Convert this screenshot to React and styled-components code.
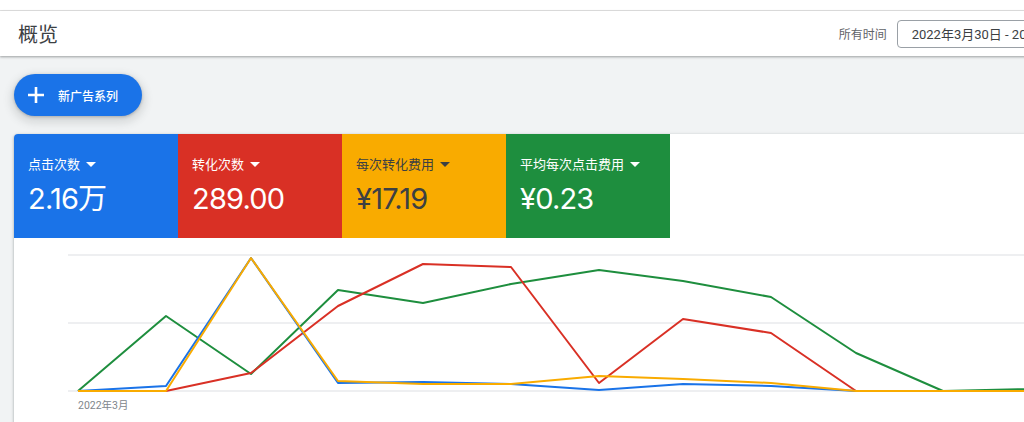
import styled, { createGlobalStyle } from "styled-components";

const GlobalStyle = createGlobalStyle`
  body {
    margin: 0;
    overflow: hidden;
    background: #f1f3f4;
    font-family: Roboto, "Noto Sans CJK SC", sans-serif;
  }
`;

const Page = styled.div`
  width: 1133px;
  min-height: 422px;
  background: #f1f3f4;
`;

const TopStrip = styled.div`
  height: 10px;
  background: #fff;
  border-bottom: 1px solid #e3e3e3;
`;

const Header = styled.header`
  height: 45px;
  display: flex;
  align-items: center;
  padding: 0 16px 0 18px;
  background: #fff;
  box-shadow: 0 1px 2px rgba(60, 64, 67, 0.35), 0 1px 3px rgba(60, 64, 67, 0.15);
  position: relative;
  z-index: 1;
`;

const Title = styled.h1`
  margin: 0;
  font-size: 20px;
  font-weight: 400;
  color: #3c4043;
  font-family: "Noto Sans CJK SC", sans-serif;
`;

const Range = styled.div`
  margin-left: auto;
  display: flex;
  align-items: center;
  gap: 10px;
`;

const RangeLabel = styled.span`
  font-size: 12px;
  color: #5f6368;
  font-family: "Noto Sans CJK SC", sans-serif;
`;

const DateBox = styled.div`
  height: 26px;
  display: flex;
  align-items: center;
  padding: 0 14px;
  border: 1px solid #9aa0a6;
  border-radius: 4px;
  font-size: 13px;
  color: #3c4043;
  white-space: nowrap;
  font-family: Roboto, "Noto Sans CJK SC", sans-serif;
`;

const Main = styled.main`
  padding: 18px 0 0 14px;
`;

const NewButton = styled.button`
  height: 42px;
  padding: 0 24px 0 13px;
  display: flex;
  align-items: center;
  gap: 13px;
  border: none;
  border-radius: 21px;
  background: #1a73e8;
  color: #fff;
  font-size: 12px;
  font-weight: 500;
  font-family: "Noto Sans CJK SC", sans-serif;
  box-shadow: 0 1px 3px rgba(60, 64, 67, 0.3), 0 4px 8px 3px rgba(60, 64, 67, 0.15);
`;

const Card = styled.section`
  margin-top: 18px;
  background: #fff;
  border-radius: 4px 0 0 0;
  box-shadow: 0 1px 2px rgba(60, 64, 67, 0.3), 0 1px 3px 1px rgba(60, 64, 67, 0.15);
  overflow: hidden;
`;

const Tiles = styled.div`
  display: flex;
`;

const Tile = styled.div`
  width: 164px;
  height: 104px;
  box-sizing: border-box;
  padding: 22px 14px 0;
  background: ${(p) => p.$bg};
  color: ${(p) => p.$fg};
`;

const Label = styled.div`
  display: flex;
  align-items: center;
  gap: 6px;
  font-size: 13px;
  line-height: 16px;
  font-family: "Noto Sans CJK SC", sans-serif;
`;

const Caret = styled.span`
  width: 0;
  height: 0;
  border-left: 5px solid transparent;
  border-right: 5px solid transparent;
  border-top: 5px solid currentColor;
`;

const Value = styled.div`
  margin-top: 9px;
  font-size: 29px;
  line-height: 36px;
  letter-spacing: -0.8px;
  font-family: Inter, "Noto Sans CJK SC", sans-serif;
`;

const ChartWrap = styled.div`
  height: 200px;
`;

const tiles = [
  { label: "点击次数", value: "2.16万", bg: "#1a73e8", fg: "#fff" },
  { label: "转化次数", value: "289.00", bg: "#d93025", fg: "#fff" },
  { label: "每次转化费用", value: "¥17.19", bg: "#f9ab00", fg: "#3c4043" },
  { label: "平均每次点击费用", value: "¥0.23", bg: "#1e8e3e", fg: "#fff" },
];

const xs = [78, 166, 251, 338, 423, 511, 599, 683, 771, 856, 943, 1030];
const series = [
  { color: "#1e8e3e", ys: [391, 316, 374, 290, 303, 284, 270, 281, 297, 353, 391, 389] },
  { color: "#d93025", ys: [391, 391, 373, 306, 264, 267, 383, 319, 333, 391, 391, 391] },
  { color: "#1a73e8", ys: [391, 386, 258, 383, 382, 384, 390, 384, 386, 391, 391, 391] },
  { color: "#f9ab00", ys: [391, 391, 258, 381, 384, 384, 376, 379, 383, 391, 391, 391] },
];

const Chart = () => (
  <svg width="1119" height="200" viewBox="14 238 1119 200">
    {[255, 323, 391].map((y) => (
      <line key={y} x1="68" x2="1133" y1={y} y2={y} stroke="#e8eaed" strokeWidth="1.5" />
    ))}
    {series.map((s) => (
      <polyline
        key={s.color}
        points={xs.map((x, i) => `${x},${s.ys[i]}`).join(" ")}
        fill="none"
        stroke={s.color}
        strokeWidth="2"
        strokeLinejoin="round"
      />
    ))}
    <text x="78" y="409" fontSize="10.5" fill="#80868b" fontFamily="Roboto, 'Noto Sans CJK SC', sans-serif">
      2022年3月
    </text>
  </svg>
);

const App = () => (
  <Page>
    <GlobalStyle />
    <TopStrip />
    <Header>
      <Title>概览</Title>
      <Range>
        <RangeLabel>所有时间</RangeLabel>
        <DateBox>2022年3月30日 - 2022年4月30日</DateBox>
      </Range>
    </Header>
    <Main>
      <NewButton>
        <svg width="18" height="18" viewBox="0 0 18 18">
          <path d="M9 1v16M1 9h16" stroke="#fff" strokeWidth="2.6" />
        </svg>
        新广告系列
      </NewButton>
      <Card>
        <Tiles>
          {tiles.map((t) => (
            <Tile key={t.label} $bg={t.bg} $fg={t.fg}>
              <Label>
                {t.label}
                <Caret />
              </Label>
              <Value>{t.value}</Value>
            </Tile>
          ))}
        </Tiles>
        <ChartWrap>
          <Chart />
        </ChartWrap>
      </Card>
    </Main>
  </Page>
);

export default App;
